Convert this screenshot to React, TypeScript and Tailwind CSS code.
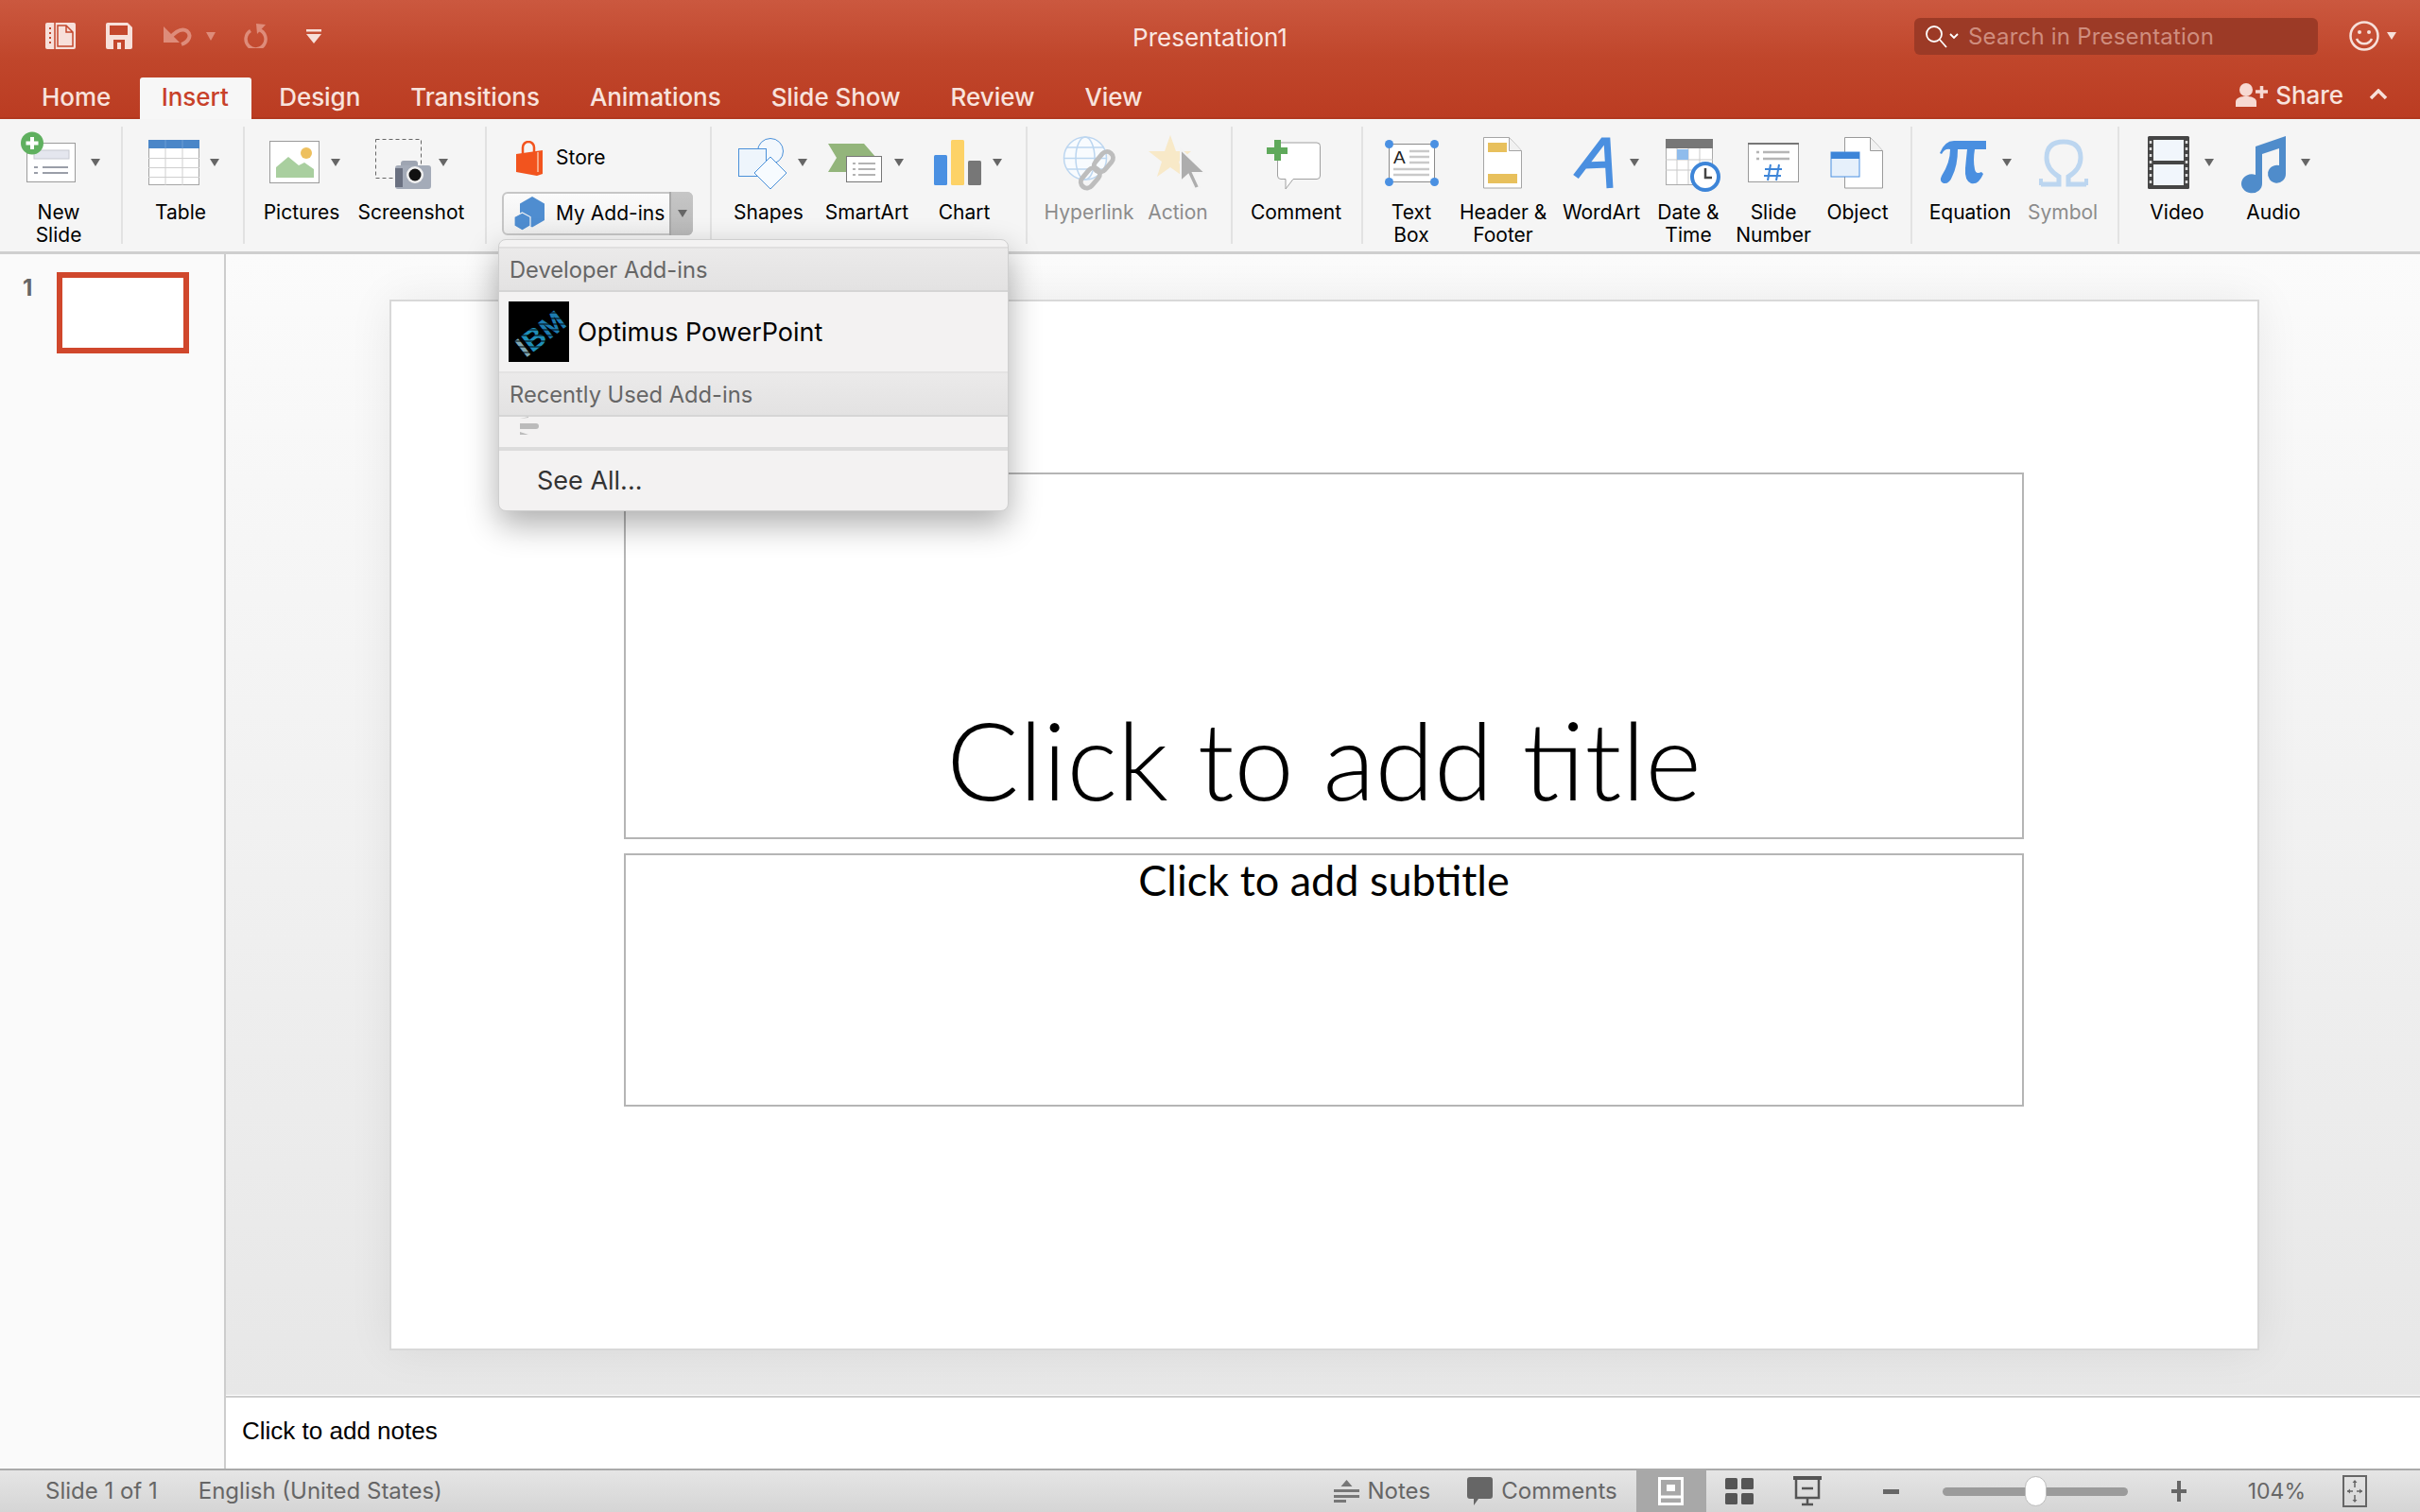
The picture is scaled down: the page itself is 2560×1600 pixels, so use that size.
import React from 'react';

const Ic = ({ w, children }: { w: number; children: React.ReactNode }) => (
  <svg width={w} height={64} viewBox={`0 0 ${w} 64`} className="shrink-0 overflow-visible">
    {children}
  </svg>
);

const Caret = ({ cls }: { cls: string }) => (
  <svg width={10} height={8} viewBox="0 0 10 8" className={`shrink-0 mt-[28px] ${cls}`}>
    <path d="M0 0h10L5 8z" fill="#666" />
  </svg>
);

const Sep = () => <div className="w-[2px] h-[124px] mt-[8px] bg-[#e2e2e2] shrink-0" />;

interface ItemProps {
  box: string;
  pad: string;
  icon: React.ReactNode;
  caret?: string;
  label: React.ReactNode;
  dim?: boolean;
}

const Item = ({ box, pad, icon, caret, label, dim }: ItemProps) => (
  <div className={`shrink-0 flex flex-col ${box}`}>
    <div className={`flex h-[73px] ${pad}`}>
      {icon}
      {caret && <Caret cls={caret} />}
    </div>
    <div className={`text-center text-[21px] leading-[24px] whitespace-nowrap ${dim ? 'text-[#8c8c8c]' : 'text-black'}`}>
      {label}
    </div>
  </div>
);

const Tab = ({ label, active }: { label: string; active?: boolean }) => (
  <div
    className={
      active
        ? 'h-[44px] mt-[6px] mr-[-2px] w-[118px] pr-[2px] pb-[3px] flex items-center justify-center bg-[#f7f7f7] rounded-t-[3px] text-[#c8412a]'
        : 'h-[44px] mt-[6px] px-[22px] pb-[3px] flex items-center text-[#f8e3dd]'
    }
  >
    {label}
  </div>
);

const NewSlideIcon = () => (
  <Ic w={58}>
    <rect x="6.5" y="11.5" width="51" height="41" fill="#fff" stroke="#9b9b9b" />
    <rect x="14" y="19" width="37" height="9" fill="#e4e6ee" stroke="#c6c8d0" />
    <path d="M14 37h4M23 37h27M14 43h4M23 43h27" stroke="#9a9ea8" strokeWidth="2" />
    <circle cx="12" cy="11.5" r="12" fill="#5fb05f" />
    <path d="M12 5v13M5.500 11.500h13" stroke="#fff" strokeWidth="4" />
  </Ic>
);

const TableIcon = () => (
  <Ic w={54}>
    <rect x="0.500" y="8.500" width="53" height="47" fill="#fff" stroke="#a5a5a5" />
    <path d="M0 27.500h54M0 37.500h54M0 47.500h54M18 17v39M36 17v39" stroke="#cfcfcf" />
    <rect x="0" y="8" width="54" height="9" fill="#4a86c8" />
    <path d="M18 8v9M36 8v9" stroke="#6b9dd5" />
  </Ic>
);

const PicturesIcon = () => (
  <Ic w={53}>
    <rect x="0.500" y="9.500" width="52" height="44" fill="#fff" stroke="#9b9b9b" />
    <path d="M7 48V37l13-11 11 9 6-3 10 7v9z" fill="#a9cf9f" />
    <circle cx="39" cy="22" r="6" fill="#eec05e" />
  </Ic>
);

const ScreenshotIcon = () => (
  <Ic w={59}>
    <rect x="0.500" y="7.500" width="48" height="41" fill="none" stroke="#666" strokeDasharray="4 3" />
    <rect x="27" y="30" width="18" height="8" rx="3" fill="#9ea5b2" />
    <rect x="21" y="35" width="38" height="25" rx="3" fill="#a4abb8" />
    <rect x="21" y="38" width="8" height="20" fill="#6a7080" />
    <circle cx="42" cy="45" r="9" fill="#f1f1f1" />
    <circle cx="42" cy="45" r="6.500" fill="#111" />
  </Ic>
);

const ShapesIcon = () => (
  <Ic w={51}>
    <circle cx="34" cy="20" r="13.500" fill="#f3f8fd" stroke="#4a90d9" />
    <rect x="0.500" y="17.500" width="29" height="29" fill="#eef5fc" stroke="#4a90d9" />
    <path d="M34 26l17 17-17 17-17-17z" fill="#f7fbff" stroke="#4a90d9" />
  </Ic>
);

const SmartArtIcon = () => (
  <Ic w={57}>
    <path d="M0 12h38l13 15-13 15H0l9-15z" fill="#93b57b" />
    <rect x="19.500" y="25.500" width="37" height="27" fill="#fff" stroke="#777" />
    <path d="M26 33h3M32 33h18M26 39h3M32 39h18M26 45h3M32 45h18" stroke="#9a9a9a" strokeWidth="1.500" />
  </Ic>
);

const ChartIcon = () => (
  <Ic w={50}>
    <rect x="0" y="24" width="14" height="32" rx="1.500" fill="#4a90e2" />
    <rect x="18" y="8" width="14" height="48" rx="1.500" fill="#fdd267" />
    <rect x="36" y="30" width="14" height="26" rx="1.500" fill="#777" />
  </Ic>
);

const HyperlinkIcon = () => (
  <Ic w={57}>
    <g fill="none" stroke="#bcd6f0" strokeWidth="1.500">
      <circle cx="23" cy="27.500" r="22.500" fill="#f8fbfe" />
      <ellipse cx="23" cy="27.500" rx="10" ry="22.500" />
      <path d="M1 27.500h44M4 16h38M4 39h38" />
    </g>
    <g fill="none" stroke="#bdbdbd" strokeWidth="5">
      <rect x="36" y="19" width="13" height="24" rx="6.500" transform="rotate(40 42 31)" />
      <rect x="22" y="36" width="13" height="24" rx="6.500" transform="rotate(40 28 48)" />
    </g>
  </Ic>
);

const ActionIcon = () => (
  <Ic w={61}>
    <path d="M23 3l6 17h16L32 31l5 16-14-10-14 10 5-16L0 20h17z" fill="#f8e9c8" />
    <path d="M34 18v34l8-7 7 15 5-2-7-15h13z" fill="#adadad" stroke="#f4f4f4" strokeWidth="2" />
  </Ic>
);

const CommentIcon = () => (
  <Ic w={57}>
    <path d="M12 11h41a3.500 3.500 0 0 1 3.500 3.500V46a3.500 3.500 0 0 1-3.500 3.500H28L20 60v-10.500h-5a3.500 3.500 0 0 1-3.500-3.500V14.500A3.500 3.500 0 0 1 12 11z" fill="#fff" stroke="#a0a0a0" />
    <path d="M8 8h7v8h7v7h-7v7H8v-7H0v-7h8z" fill="#5fa95b" />
  </Ic>
);

const TextBoxIcon = () => (
  <Ic w={57}>
    <rect x="4.500" y="12.500" width="48" height="40" fill="#fff" stroke="#8a8a8a" />
    <text x="9" y="33" fontSize="19" fontFamily="Liberation Sans" fill="#222">A</text>
    <path d="M26 20h21M26 26h21M26 32h21M9 39h38M9 45h38" stroke="#c9c9c9" strokeWidth="2.500" />
    <g fill="#4a90e2">
      <circle cx="4.500" cy="12.500" r="4.500" />
      <circle cx="52.500" cy="12.500" r="4.500" />
      <circle cx="4.500" cy="52.500" r="4.500" />
      <circle cx="52.500" cy="52.500" r="4.500" />
    </g>
  </Ic>
);

const HeaderIcon = () => (
  <Ic w={41}>
    <path d="M0.500 5.500h27l13 14v39.500H0.500z" fill="#fff" stroke="#a5a5a5" />
    <path d="M27.500 5.500v14h13" fill="#f1f1f1" stroke="#a5a5a5" />
    <rect x="5" y="11" width="20" height="10" fill="#e8c05c" />
    <rect x="5" y="44" width="31" height="10" fill="#e8c05c" />
  </Ic>
);

const WordArtIcon = () => (
  <Ic w={41}>
    <path d="M3 47L32 9h4l3 50M13 35l24-1" fill="none" stroke="#4a8fe0" strokeWidth="7" />
  </Ic>
);

const DateIcon = () => (
  <Ic w={58}>
    <rect x="0.500" y="7.500" width="49" height="48" fill="#fff" stroke="#aaa" />
    <path d="M0 29h50M0 40h50M12 17v38M24 17v38M36 17v38" stroke="#c9c9c9" />
    <rect x="0" y="7" width="50" height="10" fill="#777" />
    <rect x="12" y="18" width="12" height="11" fill="#8fbcec" />
    <circle cx="42" cy="47" r="14" fill="#fff" stroke="#3d85d8" strokeWidth="4" />
    <path d="M42 38v10h7" fill="none" stroke="#444" strokeWidth="2.500" />
  </Ic>
);

const SlideNumberIcon = () => (
  <Ic w={54}>
    <rect x="0.500" y="11.500" width="53" height="41" fill="#fff" stroke="#9a9a9a" />
    <path d="M0 12h54" stroke="#777" strokeWidth="2" />
    <path d="M9 21h3M16 21h28M9 28h3M16 28h28" stroke="#b5b5b5" strokeWidth="2.500" />
    <path d="M24 34l-3 17M33 34l-3 17M18 39h18M17 46h18" stroke="#3d85d8" strokeWidth="2" />
  </Ic>
);

const ObjectIcon = () => (
  <Ic w={55}>
    <path d="M14.500 5.500h27l13 14v39.500h-40z" fill="#fff" stroke="#9a9a9a" />
    <path d="M41.500 5.500v14h13" fill="#f1f1f1" stroke="#9a9a9a" />
    <rect x="0" y="21" width="30" height="26" fill="#e6f0fb" stroke="#4a90e2" />
    <rect x="0" y="21" width="30" height="7" fill="#3d85d8" />
  </Ic>
);

const PiIcon = () => (
  <Ic w={50}>
    <path d="M1 22Q6 9 16 9H50V18H38Q36 30 38 39Q39 45 45 42L47 44Q42 56 34 54Q27 51 28 38Q29 27 30 18H20Q20 35 14 47Q11 55 5 54Q0 52 3 46Q12 32 12 18Q6 17 3 23Z" fill="#4a8fe0" />
  </Ic>
);

const OmegaIcon = () => (
  <Ic w={50}>
    <path d="M1 55H20V47Q7 39 7 27Q7 10 25 10Q43 10 43 27Q43 39 30 47V55H49" fill="none" stroke="#bcd6f0" strokeWidth="5" />
    <path d="M1 49V56M49 49V56" stroke="#bcd6f0" strokeWidth="4" />
  </Ic>
);

const VideoIcon = () => (
  <Ic w={44}>
    <rect x="0" y="4" width="44" height="56" rx="1.500" fill="#454545" />
    <rect x="6" y="8" width="32" height="22" fill="#f1f6fc" />
    <rect x="6" y="34" width="32" height="22" fill="#f1f6fc" />
    <path d="M3 9v46M41 9v46" stroke="#ddd" strokeWidth="2.500" strokeDasharray="3 4" />
  </Ic>
);

const AudioIcon = () => (
  <Ic w={48}>
    <path d="M16 15L48 4V44a9.500 9.500 0 1 1-7-9V17L23 23V54a11 10 0 1 1-7-9z" fill="#4f8ccb" />
  </Ic>
);

const TitleIcons = () => (
  <div className="flex items-center pl-[48px]">
    <svg width="32" height="28" viewBox="0 0 32 28">
      <rect width="32" height="28" rx="2" fill="#f7e0da" />
      <path d="M10 0v28" stroke="#c4472d" strokeWidth="1.500" />
      <path d="M4 6h2M4 11h2M4 16h2M4 21h2" stroke="#c4472d" strokeWidth="2" />
      <path d="M13 3h9l7 7v15H13zM22 3v7h7" fill="none" stroke="#c4472d" strokeWidth="1.500" />
    </svg>
    <svg width="28" height="28" viewBox="0 0 28 28" className="ml-[32px]">
      <path d="M2 0h21l5 5v21a2 2 0 0 1-2 2H2a2 2 0 0 1-2-2V2a2 2 0 0 1 2-2z" fill="#f7e0da" />
      <rect x="4" y="3" width="19" height="10" fill="#c4472d" />
      <rect x="8" y="18" width="12" height="10" fill="#c4472d" />
      <rect x="12" y="21" width="4" height="7" fill="#f7e0da" />
    </svg>
    <svg width="31" height="22" viewBox="0 0 31 22" className="ml-[32px]">
      <path d="M1 1v17h17l-6-6" fill="#de8c7a" />
      <path d="M7 14C13 7 20 2 26 6c5 4 2 11-6 14" fill="none" stroke="#de8c7a" strokeWidth="4" />
    </svg>
    <svg width="10" height="9" viewBox="0 0 10 9" className="ml-[15px]">
      <path d="M0 0h10L5 9z" fill="#de8c7a" />
    </svg>
    <svg width="25" height="26" viewBox="0 0 25 26" className="ml-[30px]">
      <path d="M7 7.500a10.500 10.500 0 1 0 9 -1" fill="none" stroke="#de8c7a" strokeWidth="3.500" />
      <path d="M13 0l10 1-9 10z" fill="#de8c7a" />
    </svg>
    <svg width="16" height="15" viewBox="0 0 16 15" className="ml-[41px]">
      <path d="M0 0h16v2.500H0zM0 5h16l-8 10z" fill="#f7e0da" />
    </svg>
  </div>
);

const AddinsMenu = () => (
  <div className="absolute left-[-6px] top-[48px] z-20 w-[540px] h-[288px] rounded-[8px] bg-[#f3f2f2] border border-[#cfcfcf] shadow-[0_14px_34px_rgba(0,0,0,0.32)] overflow-hidden font-['Inter',sans-serif]">
    <div className="h-[7px]" />
    <div className="h-[48px] pl-[11px] pt-[2px] flex items-center text-[23.7px] text-[#666] bg-[linear-gradient(#ebeaea,#e3e2e2)] border-t-2 border-b-2 border-t-[#e0dfdf] border-b-[#d5d5d5]">
      Developer Add-ins
    </div>
    <div className="h-[84px] flex items-center pl-[10px] text-[27px] text-black">
      <svg width="64" height="64" viewBox="0 0 64 64" className="shrink-0">
        <rect width="64" height="64" fill="#000" />
        <text x="18" y="60" fontSize="31" fontWeight="700" fontFamily="Liberation Sans" transform="rotate(-38 18 60)">
          <tspan fill="#7fa7b3">I</tspan>
          <tspan fill="#1f8fb8">B</tspan>
          <tspan fill="#1d7cb0">M</tspan>
        </text>
        <path d="M0 6h64M0 12h64M0 18h64M0 24h64M0 30h64M0 36h64M0 42h64M0 48h64M0 54h64M0 60h64" stroke="#000" strokeWidth="1" />
      </svg>
      <span className="ml-[9px] pt-[3px]">Optimus PowerPoint</span>
    </div>
    <div className="h-[48px] pl-[11px] pt-[2px] flex items-center text-[23.7px] text-[#666] bg-[linear-gradient(#ebeaea,#e3e2e2)] border-t-2 border-b-2 border-t-[#e4e3e3] border-b-[#d5d5d5]">
      Recently Used Add-ins
    </div>
    <div className="h-[32px] pl-[22px]">
      <svg width="20" height="20" viewBox="0 0 20 20" className="block">
        <path d="M0 2l9-2v1zM1 7h16a2.500 2.500 0 0 1 0 6H1a2.500 2.500 0 0 1 0-6zM0 16l9 3H0z" fill="#bbb" />
      </svg>
    </div>
    <div className="h-[4px] bg-[#dcdcdc]" />
    <div className="h-[64px] pl-[40px] flex items-center text-[27px] text-[#333]">See All...</div>
  </div>
);

const StatusIcons = () => (
  <div className="flex items-center h-full">
    <svg width="27" height="24" viewBox="0 0 27 24" className="shrink-0">
      <path d="M13.500 0l6 7h-12zM0 10h27v3H0zM0 16h27v3H0zM0 21h13v3H0z" fill="#777" />
    </svg>
    <span className="ml-[9px]">Notes</span>
    <svg width="27" height="30" viewBox="0 0 27 30" className="ml-[39px] shrink-0">
      <path d="M3 0h21a3 3 0 0 1 3 3v17a3 3 0 0 1-3 3H12l-5 7v-7H3a3 3 0 0 1-3-3V3a3 3 0 0 1 3-3z" fill="#666" />
    </svg>
    <span className="ml-[9px]">Comments</span>
    <div className="ml-[20px] w-[74px] h-full bg-[#a8a8a8] flex items-center justify-center shrink-0">
      <svg width="27" height="30" viewBox="0 0 27 30">
        <rect x="1.500" y="1.500" width="24" height="27" fill="none" stroke="#fff" strokeWidth="3" />
        <path d="M0 21h27" stroke="#fff" strokeWidth="3" />
        <rect x="9" y="8" width="9" height="7" fill="#fff" />
      </svg>
    </div>
    <svg width="30" height="28" viewBox="0 0 30 28" className="ml-[20px] shrink-0">
      <g fill="#555">
        <rect width="13" height="12" rx="1.500" />
        <rect x="17" width="13" height="12" rx="1.500" />
        <rect y="16" width="13" height="12" rx="1.500" />
        <rect x="17" y="16" width="13" height="12" rx="1.500" />
      </g>
    </svg>
    <svg width="30" height="32" viewBox="0 0 30 32" className="ml-[42px] shrink-0">
      <path d="M0 0h30v4H0z" fill="#555" />
      <path d="M3 2v21h24V2M15 23v7M9 30h12M9 13h12" fill="none" stroke="#555" strokeWidth="2.500" />
    </svg>
    <div className="ml-[65px] w-[17px] h-[5px] bg-[#666] shrink-0" />
    <div className="ml-[46px] w-[196px] h-[9px] rounded-full bg-[#9b9b9b] shrink-0 flex items-center pl-[87px]">
      <div className="w-[23px] h-[32px] rounded-full bg-white border border-[#bbb]" />
    </div>
    <svg width="16" height="22" viewBox="0 0 16 22" className="ml-[46px] shrink-0">
      <path d="M6 0h4v9h6v4h-6v9H6v-9H0V9h6z" fill="#666" />
    </svg>
    <span className="ml-[65px] text-[23px]">104%</span>
    <svg width="26" height="34" viewBox="0 0 26 34" className="ml-[39px] shrink-0">
      <rect x="1" y="1" width="24" height="32" fill="none" stroke="#666" strokeWidth="2" />
      <path d="M13 6v7M13 21v7M5 17h6M15 17h6" stroke="#666" strokeWidth="1.500" />
      <path d="M13 5l-2.500 3h5zM13 29l-2.500-3h5zM5 17l3-2.500v5zM21 17l-3-2.500v5z" fill="#666" />
    </svg>
  </div>
);

export default function App() {
  return (
    <div className="relative w-[2560px] h-[1600px] overflow-hidden flex flex-col bg-white font-['Inter',sans-serif]">
      {/* title bar and tabs */}
      <div className="h-[126px] shrink-0 flex flex-col bg-[linear-gradient(#cb583f,#c0462b_50%,#bb3c22)] border-b-2 border-b-[#b1391f]">
        <div className="h-[76px] flex items-center">
          <div className="flex-1">
            <TitleIcons />
          </div>
          <div className="pt-[3px] text-[26px] text-[#f9e6e1]">Presentation1</div>
          <div className="flex-1 flex items-center justify-end">
            <div className="w-[427px] h-[39px] mt-[1px] rounded-[6px] bg-[#9c3a26] flex items-center pl-[12px]">
              <svg width="36" height="24" viewBox="0 0 36 24" className="shrink-0">
                <circle cx="9" cy="9" r="8" fill="none" stroke="#fff" strokeWidth="1.800" />
                <path d="M15 15l7 8M26 9l4 4 4-4" fill="none" stroke="#fff" strokeWidth="1.800" />
              </svg>
              <span className="ml-[9px] pt-[1px] text-[24px] tracking-[0.2px] text-[#cf8d7e]">Search in Presentation</span>
            </div>
            <svg width="32" height="32" viewBox="0 0 32 32" className="ml-[33px] shrink-0">
              <circle cx="16" cy="16" r="14.500" fill="none" stroke="#f7e0da" strokeWidth="2.500" />
              <circle cx="11" cy="12" r="2" fill="#f7e0da" />
              <circle cx="21" cy="12" r="2" fill="#f7e0da" />
              <path d="M8 19c3 7 13 7 16 0" fill="none" stroke="#f7e0da" strokeWidth="2.500" />
            </svg>
            <svg width="10" height="8" viewBox="0 0 10 8" className="ml-[8px] mr-[25px] shrink-0">
              <path d="M0 0h10L5 8z" fill="#f7e0da" />
            </svg>
          </div>
        </div>
        <div className="h-[48px] flex pl-[22px] gap-[9px] text-[26px] tracking-[-0.05px] font-medium">
          <Tab label="Home" />
          <Tab label="Insert" active />
          <Tab label="Design" />
          <Tab label="Transitions" />
          <Tab label="Animations" />
          <Tab label="Slide Show" />
          <Tab label="Review" />
          <Tab label="View" />
          <div className="ml-auto flex items-center pr-[34px] text-[#f8e3dd]">
            <svg width="34" height="25" viewBox="0 0 34 25" className="shrink-0">
              <circle cx="11" cy="7" r="7" fill="#f7d9d2" />
              <path d="M0 25v-5c0-5 6-6 11-6s11 1 11 6v5z" fill="#f7d9d2" />
              <path d="M21 9h13M27.500 3v13" stroke="#f7d9d2" strokeWidth="3.500" />
            </svg>
            <span className="ml-[8px]">Share</span>
            <svg width="20" height="12" viewBox="0 0 20 12" className="ml-[27px] shrink-0">
              <path d="M2 10l8-8 8 8" fill="none" stroke="#f7e0da" strokeWidth="3.500" />
            </svg>
          </div>
        </div>
      </div>

      {/* ribbon */}
      <div className="h-[143px] shrink-0 flex bg-[#f5f5f5] border-b-[3px] border-b-[#cfcfcf] font-['Inter',sans-serif]">
        <div className="w-[128px] shrink-0 flex pt-[14px]">
          <Item box="w-[124px]" pad="pl-[22px]" icon={<NewSlideIcon />} caret="ml-[16px]" label={<>New<br />Slide</>} />
        </div>
        <Sep />
        <div className="w-[127px] shrink-0 flex pt-[14px]">
          <Item box="w-[122px]" pad="pl-[27px]" icon={<TableIcon />} caret="ml-[11px]" label="Table" />
        </div>
        <Sep />
        <div className="w-[254px] shrink-0 flex pt-[14px] pl-[4px]">
          <Item box="w-[112px]" pad="pl-[22px]" icon={<PicturesIcon />} caret="ml-[12px]" label="Pictures" />
          <Item box="w-[120px]" pad="pl-[22px]" icon={<ScreenshotIcon />} caret="ml-[8px]" label="Screenshot" />
        </div>
        <Sep />
        <div className="w-[236px] shrink-0 pt-[14px] pl-[16px] text-[21px] text-black">
          <div className="h-[54px] flex items-center pl-[15px]">
            <svg width="28" height="37" viewBox="0 0 28 37" className="shrink-0">
              <path d="M7 14V7a6 6 0 0 1 12 0v6" fill="none" stroke="#f2541e" strokeWidth="2.500" />
              <path d="M0 14L28 10V35L22 37 0 33z" fill="#f2541e" />
              <path d="M23 12V33" stroke="#f9c3a8" strokeWidth="1.500" />
            </svg>
            <span className="ml-[14px]">Store</span>
          </div>
          <div className="relative mt-[9px] w-[202px] h-[46px] rounded-[6px] border-2 border-[#c6c6c6] bg-[linear-gradient(#fbfbfb,#efefef)] flex items-center pl-[11px]">
            <svg width="32" height="36" viewBox="0 0 32 36" className="shrink-0">
              <path d="M19 0L32 7.500V25L19 32.500 6 25V7.500z" fill="#4f8dd0" />
              <path d="M8.500 17L17 21.500V31L8.500 36 0 31V21.500z" fill="#4f8dd0" stroke="#f4f4f4" strokeWidth="1.200" />
            </svg>
            <span className="ml-[12px]">My Add-ins</span>
            <div className="absolute right-[-2px] top-[-2px] bottom-[-2px] w-[25px] bg-[linear-gradient(#c6c6c6,#b8b8b8)] border-l-2 border-l-[#a9a9a9] rounded-r-[6px] flex items-center justify-center">
              <svg width="10" height="8" viewBox="0 0 10 8"><path d="M0 0h10L5 8z" fill="#666" /></svg>
            </div>
            <AddinsMenu />
          </div>
        </div>
        <Sep />
        <div className="w-[332px] shrink-0 flex pt-[14px] pl-[10px]">
          <Item box="w-[100px]" pad="pl-[18px]" icon={<ShapesIcon />} caret="ml-[12px]" label="Shapes" />
          <Item box="w-[108px]" pad="pl-[13px]" icon={<SmartArtIcon />} caret="ml-[13px]" label="SmartArt" />
          <Item box="w-[98px]" pad="pl-[17px]" icon={<ChartIcon />} caret="ml-[12px]" label="Chart" />
        </div>
        <Sep />
        <div className="w-[215px] shrink-0 flex pt-[14px] pl-[13px]">
          <Item box="w-[104px]" pad="pl-[25px]" icon={<HyperlinkIcon />} label="Hyperlink" dim />
          <Item box="w-[84px]" pad="pl-[11px]" icon={<ActionIcon />} label="Action" dim />
        </div>
        <Sep />
        <div className="w-[136px] shrink-0 flex pt-[14px]">
          <Item box="w-[134px]" pad="pl-[36px]" icon={<CommentIcon />} label="Comment" />
        </div>
        <Sep />
        <div className="w-[579px] shrink-0 flex pt-[14px]">
          <Item box="w-[102px]" pad="pl-[23px]" icon={<TextBoxIcon />} label={<>Text<br />Box</>} />
          <Item box="w-[92px]" pad="pl-[25px]" icon={<HeaderIcon />} label={<>Header &amp;<br />Footer</>} />
          <Item box="w-[116px]" pad="pl-[28px]" icon={<WordArtIcon />} caret="ml-[19px]" label="WordArt" />
          <Item box="w-[68px]" pad="pl-[10px]" icon={<DateIcon />} label={<>Date &amp;<br />Time</>} />
          <Item box="w-[112px]" pad="pl-[29px]" icon={<SlideNumberIcon />} label={<>Slide<br />Number</>} />
          <Item box="w-[66px]" pad="pl-[5px]" icon={<ObjectIcon />} label="Object" />
        </div>
        <Sep />
        <div className="w-[217px] shrink-0 flex pt-[14px]">
          <Item box="w-[122px]" pad="pl-[28px]" icon={<PiIcon />} caret="ml-[17px]" label="Equation" />
          <Item box="w-[74px]" pad="pl-[13px]" icon={<OmegaIcon />} label="Symbol" dim />
        </div>
        <Sep />
        <div className="flex pt-[14px]">
          <Item box="w-[122px]" pad="pl-[30px]" icon={<VideoIcon />} caret="ml-[16px]" label="Video" />
          <Item box="w-[82px]" pad="pl-[6px]" icon={<AudioIcon />} caret="ml-[16px]" label="Audio" />
        </div>
      </div>

      {/* workspace */}
      <div className="flex-1 min-h-0 flex">
        <div className="w-[239px] shrink-0 bg-[#fafafa] border-r-2 border-r-[#cdcdcd] flex items-start pt-[19px] pl-[24px]">
          <span className="w-[36px] mt-[4px] text-[24px] leading-[26px] font-bold text-[#666]">1</span>
          <div className="w-[140px] h-[86px] border-[6px] border-[#d0472c] bg-white" />
        </div>
        <div className="flex-1 min-w-0 flex flex-col">
          <div className="flex-1 min-h-0 pl-[173px] pt-[48px] bg-[linear-gradient(#fbfbfb,#e7e7e7)] border-b border-b-white">
            <div className="w-[1978px] h-[1112px] bg-white border-2 border-[#d8d8d8] shadow-[0_0_44px_rgba(0,0,0,0.07)] pl-[246px] pt-[181px]">
              <div className="w-[1481px] h-[388px] pb-[13px] border-2 border-[#b5b5b5] flex items-end justify-center font-['Lato',sans-serif] font-light text-[113.5px] leading-[140px] text-black">
                Click to add title
              </div>
              <div className="mt-[15px] w-[1481px] h-[268px] border-2 border-[#b5b5b5] text-center font-['Lato',sans-serif] text-[45px] leading-[52px] text-black">
                Click to add subtitle
              </div>
            </div>
          </div>
          <div className="h-[77px] pb-[5px] shrink-0 bg-white border-t-2 border-t-[#cdcdcd] flex items-center pl-[17px] font-['Liberation_Sans',sans-serif] text-[26px] text-black">
            Click to add notes
          </div>
        </div>
      </div>

      {/* status bar */}
      <div className="h-[46px] shrink-0 border-t-2 border-t-[#aaaaaa] bg-[linear-gradient(#e5e5e5,#d5d5d5)] flex items-stretch text-[24px] text-[#666]">
        <div className="flex items-center pl-[48px]">
          <span>Slide 1 of 1</span>
          <span className="ml-[43px]">English (United States)</span>
        </div>
        <div className="ml-auto pr-[56px]">
          <StatusIcons />
        </div>
      </div>
    </div>
  );
}
